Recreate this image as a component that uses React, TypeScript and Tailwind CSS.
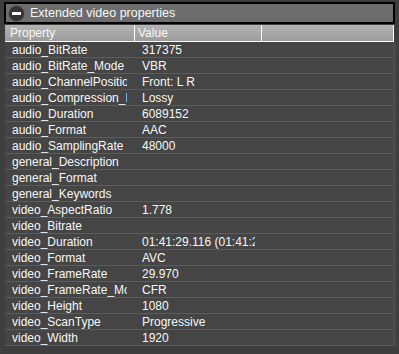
import React from "react";

const rows: [string, string][] = [
  ["audio_BitRate", "317375"],
  ["audio_BitRate_Mode", "VBR"],
  ["audio_ChannelPositions", "Front: L R"],
  ["audio_Compression_Mode", "Lossy"],
  ["audio_Duration", "6089152"],
  ["audio_Format", "AAC"],
  ["audio_SamplingRate", "48000"],
  ["general_Description", ""],
  ["general_Format", ""],
  ["general_Keywords", ""],
  ["video_AspectRatio", "1.778"],
  ["video_Bitrate", ""],
  ["video_Duration", "01:41:29.116 (01:41:29.116)"],
  ["video_Format", "AVC"],
  ["video_FrameRate", "29.970"],
  ["video_FrameRate_Mode", "CFR"],
  ["video_Height", "1080"],
  ["video_ScanType", "Progressive"],
  ["video_Width", "1920"],
];

export default function App() {
  return (
    <div
      className="w-[399px] h-[354px] bg-[#3e3e3e] overflow-hidden pt-[2px] text-[#f7f7f7]"
      style={{ fontFamily: '"Liberation Sans", Arial, sans-serif' }}
    >
      <div className="mx-[4px] h-[22px] border-2 border-black bg-[#6d6d6d] flex items-center pl-[2px]">
        <div className="w-[17px] h-[17px] rounded-full bg-[#333333] border border-[#666] flex items-center justify-center">
          <div className="w-[9px] h-[3px] bg-white" />
        </div>
        <span className="ml-[5px] text-[12.5px] leading-none">Extended video properties</span>
      </div>
      <div className="ml-[5px] mr-[3px] mt-[1px] flex flex-col">
        <div className="h-[17px] flex bg-gradient-to-b from-[#b4b4b4] to-[#9c9c9c] border-b border-r border-white text-[12px] leading-none w-[389px]">
          <div className="w-[130px] border-r border-white flex items-center pl-[5px]">Property</div>
          <div className="w-[127px] border-r border-white flex items-center pl-[3px]">Value</div>
          <div className="flex-1" />
        </div>
        <div className="bg-[#454545] w-[391px] border-r-[3px] border-[#4b4b4b]">
          {rows.map(([k, v]) => (
            <div key={k} className="h-[16px] pt-[1px] flex border-b border-[#5c5c5c] text-[12px] leading-[14px]">
              <div className="w-[130px] pl-[7px] pr-[8px]">
                <span className="overflow-hidden whitespace-nowrap block w-full h-[14px]">{k}</span>
              </div>
              <div className="w-[127px] pl-[7px] pr-[7px]">
                <span className="overflow-hidden whitespace-nowrap block w-full h-[14px]">{v}</span>
              </div>
              <div className="flex-1" />
            </div>
          ))}
        </div>
      </div>
    </div>
  );
}
